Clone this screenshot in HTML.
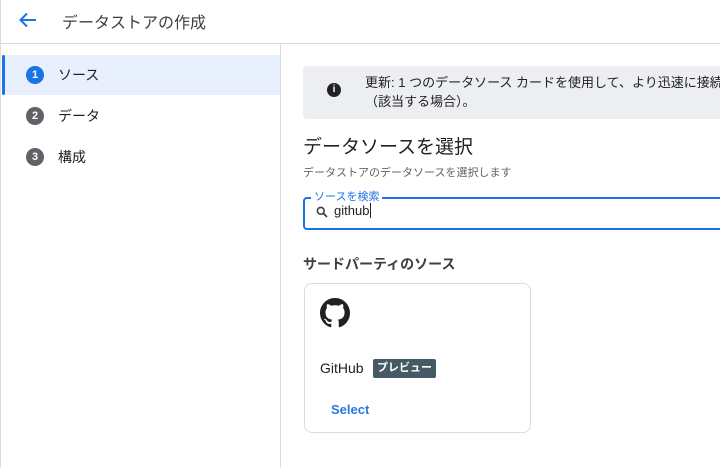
<!DOCTYPE html>
<html><head><meta charset="utf-8"><style>
*{box-sizing:border-box;margin:0;padding:0}
body{width:720px;height:468px;overflow:hidden;background:#fff;font-family:"Liberation Sans","Noto Sans CJK JP",sans-serif;color:#202124;position:relative}
.abs{position:absolute}
</style></head><body>
<div class="abs" style="left:0;top:0;width:1px;height:468px;background:#dadce0"></div>
<svg class="abs" style="left:18px;top:11px" width="20" height="18" viewBox="0 0 20 18"><path d="M18 9H3M9 2.5L2.5 9L9 15.5" fill="none" stroke="#1a73e8" stroke-width="2"/></svg>
<div class="abs" style="left:62px;top:9px;font-size:16px;color:#3c4043">データストアの作成</div>
<div class="abs" style="left:0;top:43px;width:720px;height:1px;background:#dadce0"></div>
<div class="abs" style="left:280px;top:44px;width:1px;height:424px;background:#dadce0"></div>
<div class="abs" style="left:2px;top:55px;width:278px;height:40px;background:#e8f0fe"></div>
<div class="abs" style="left:2px;top:55px;width:3px;height:40px;background:#1a73e8;border-radius:2px"></div>
<div class="abs" style="left:26px;top:66px;width:18px;height:18px;border-radius:50%;background:#1a73e8;color:#fff;font-size:11px;font-weight:bold;text-align:center;line-height:18px">1</div>
<div class="abs" style="left:58px;top:65px;font-size:14px">ソース</div>
<div class="abs" style="left:26px;top:107px;width:18px;height:18px;border-radius:50%;background:#5f6368;color:#fff;font-size:11px;font-weight:bold;text-align:center;line-height:18px">2</div>
<div class="abs" style="left:58px;top:106px;font-size:14px">データ</div>
<div class="abs" style="left:26px;top:148px;width:18px;height:18px;border-radius:50%;background:#5f6368;color:#fff;font-size:11px;font-weight:bold;text-align:center;line-height:18px">3</div>
<div class="abs" style="left:58px;top:147px;font-size:14px">構成</div>
<div class="abs" style="left:303px;top:66px;width:430px;height:53px;background:#eceef2;border-radius:4px"></div>
<div class="abs" style="left:327px;top:83px;width:14px;height:14px;border-radius:50%;background:#202124;color:#fff;font-size:10px;font-weight:bold;text-align:center;line-height:14px">i</div>
<div class="abs" style="left:365px;top:73px;font-size:13px;line-height:19px;white-space:nowrap;color:#202124">更新: 1 つのデータソース カードを使用して、より迅速に接続<br>（該当する場合）。</div>
<div class="abs" style="left:303px;top:132px;font-size:19px;color:#202124">データソースを選択</div>
<div class="abs" style="left:303px;top:164px;font-size:11px;color:#5f6368">データストアのデータソースを選択します</div>
<div class="abs" style="left:303px;top:197px;width:430px;height:33px;border:2px solid #1a73e8;border-radius:4px"></div>
<div class="abs" style="left:311px;top:190px;font-size:11px;color:#1a73e8;background:#fff;padding:0 3px;line-height:14px">ソースを検索</div>
<svg class="abs" style="left:316px;top:206px" width="12" height="12" viewBox="0 0 12 12"><circle cx="4.8" cy="4.8" r="3.4" fill="none" stroke="#3c4043" stroke-width="1.6"/><path d="M7.3 7.3L11 11" stroke="#3c4043" stroke-width="1.8"/></svg>
<div class="abs" style="left:334px;top:203px;font-size:13px;color:#202124">github<span style="border-left:1px solid #202124;margin-left:1px"></span></div>
<div class="abs" style="left:303px;top:254px;font-size:14px;font-weight:bold;color:#3c4043">サードパーティのソース</div>
<div class="abs" style="left:304px;top:283px;width:227px;height:150px;border:1px solid #dadce0;border-radius:8px"></div>
<svg class="abs" style="left:320px;top:298px" width="30" height="30" viewBox="0 0 16 16"><path fill="#202124" d="M8 0C3.58 0 0 3.58 0 8c0 3.54 2.290 6.53 5.47 7.59.4.07.55-.17.55-.38 0-.19-.01-.82-.01-1.490-2.01.37-2.53-.49-2.69-.94-.09-.23-.48-.94-.82-1.130-.28-.15-.68-.52-.01-.53.63-.01 1.080.58 1.230.82.72 1.210 1.870.87 2.330.66.07-.52.28-.87.51-1.070-1.780-.2-3.640-.89-3.640-3.950 0-.87.31-1.590.82-2.150-.08-.2-.36-1.020.08-2.120 0 0 .67-.21 2.200.82.64-.18 1.320-.27 2-.27.68 0 1.360.09 2 .27 1.530-1.040 2.200-.82 2.200-.82.44 1.100.16 1.920.08 2.120.51.56.82 1.270.82 2.150 0 3.070-1.870 3.750-3.650 3.950.29.25.54.73.54 1.480 0 1.070-.01 1.930-.01 2.200 0 .21.15.46.55.38A8.013 8.013 0 0016 8c0-4.420-3.580-8-8-8z"/></svg>
<div class="abs" style="left:320px;top:360px;font-size:14px;color:#202124">GitHub</div>
<div class="abs" style="left:373px;top:359px;height:19px;padding:0 4px;background:#455a64;color:#fff;font-size:11px;font-weight:bold;line-height:19px;border-radius:2px">プレビュー</div>
<div class="abs" style="left:331px;top:402px;font-size:13px;font-weight:bold;color:#2979e6">Select</div>
</body></html>
